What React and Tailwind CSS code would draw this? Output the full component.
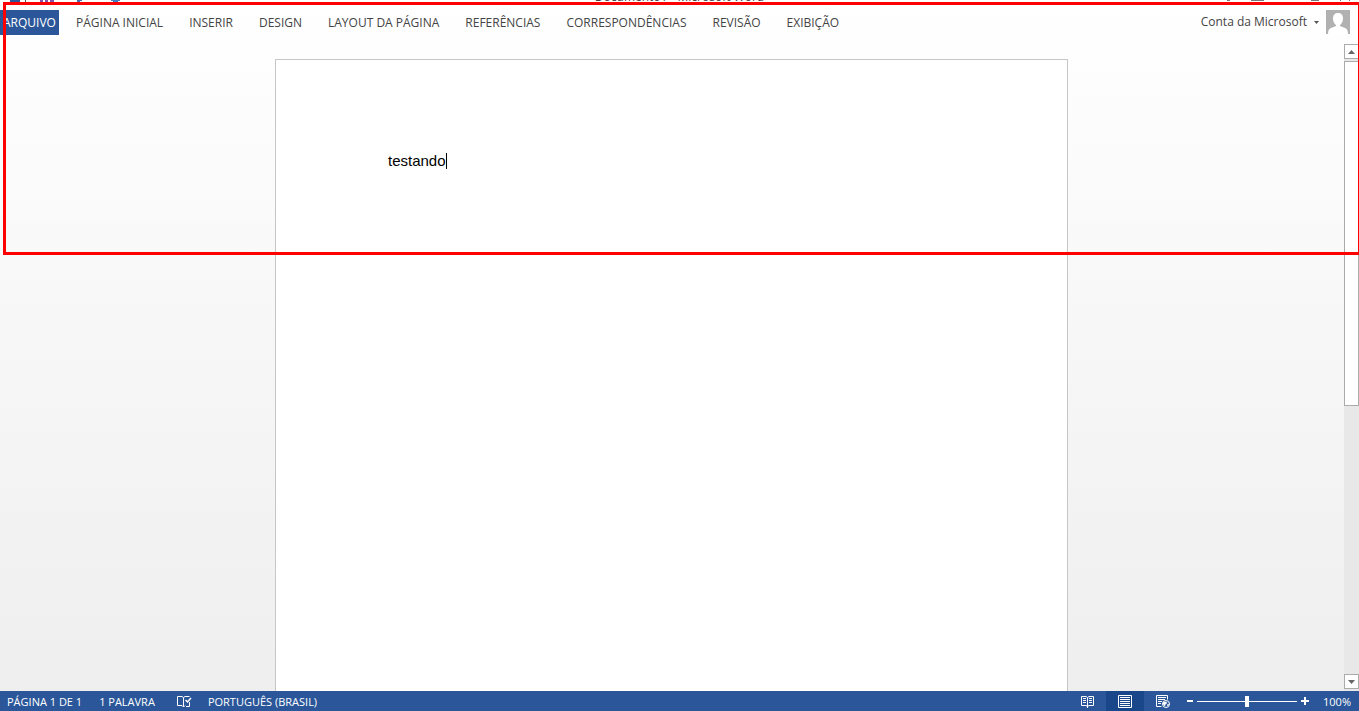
import React, { useState } from 'react';

const tabs = [
    'PÁGINA INICIAL',
    'INSERIR',
    'DESIGN',
    'LAYOUT DA PÁGINA',
    'REFERÊNCIAS',
    'CORRESPONDÊNCIAS',
    'REVISÃO',
    'EXIBIÇÃO',
];

// Only the lower edge of the title bar stays visible
function TitleBar() {
    return (
        <header className="flex h-[10px] shrink-0 items-start justify-between overflow-hidden">
            <svg className="h-[3px] w-[140px]" viewBox="0 0 140 3" shapeRendering="crispEdges">
                <path d="M10 0h10v2H10z" fill="#2b579a" />
                <path d="M25 0h1v2h-1z" fill="#555" />
                <path d="M40 0h3v2h-3zM45 0h3v2h-3zM50 0h4v2h-4z" fill="#8553a8" />
                <path d="M77 0h5v1h-2v1h-3z" fill="#3e6db5" />
                <path d="M111 0h9v1h-2v1h-5v-1h-2z" fill="#3e7dc0" />
            </svg>
            <h1 className="-mt-[11px] text-[12px] leading-[16px] text-[#444]">Documento1 - Microsoft Word</h1>
            <svg className="h-[3px] w-[140px]" viewBox="0 0 140 3" shapeRendering="crispEdges">
                <path d="M8 0h3v1H8zM32 0h13v1H32zM92 0h8v1h-8zM121 0h1v1h-1zM130 0h1v1h-1z" fill="#777" />
            </svg>
        </header>
    );
}

function Ribbon() {
    return (
        <div className="flex h-[34px] shrink-0 items-start justify-between">
            <nav className="flex h-[25px] items-center gap-[26px] text-[12px] leading-[16px] text-[#444]">
                <button className="-mr-[9px] h-full w-[59px] bg-[#2b579a] text-white">ARQUIVO</button>
                {tabs.map((tab) => (
                    <button key={tab} className="whitespace-nowrap">{tab}</button>
                ))}
            </nav>
            <button className="mr-[9px] flex items-center text-[12px] leading-[16px] text-[#444]">
                Conta da Microsoft
                <svg className="ml-[7px] mr-[7px] h-[3px] w-[5px]" viewBox="0 0 5 3">
                    <path d="M0 0h5L2.5 3z" fill="#555" />
                </svg>
                <svg className="size-6" viewBox="0 0 24 24">
                    <path d="M0 0h24v24H0z" fill="#b1b1b1" />
                    <path d="M12 3q5 0 5 5.500c0 3-1.500 5.500-3 6.500v1l5 2q3 1 3 6H2q0-5 3-6l5-2v-1C8.500 14 7 11.500 7 8.500Q7 3 12 3z" fill="#fff" />
                </svg>
            </button>
        </div>
    );
}

function ScrollBar() {
    return (
        <div className="ml-px flex w-[15px] shrink-0 flex-col bg-[#e8e8e8]">
            <button aria-label="Rolar para cima" className="flex h-[15px] shrink-0 items-center justify-center border border-[#ababab] bg-white">
                <svg className="h-1 w-[7px]" viewBox="0 0 7 4"><path d="M0 4h7L3.5 0z" fill="#666" /></svg>
            </button>
            <div className="mt-0.5 flex-1">
                <div className="h-[56.3%] border border-[#ababab] bg-white" />
            </div>
            <button aria-label="Rolar para baixo" className="mb-0.5 flex h-[15px] shrink-0 items-center justify-center border border-[#ababab] bg-white">
                <svg className="h-1 w-[7px]" viewBox="0 0 7 4"><path d="M0 0h7L3.5 4z" fill="#666" /></svg>
            </button>
        </div>
    );
}

function StatusBar() {
    const [zoom, setZoom] = useState(100);

    return (
        <footer className="flex h-5 shrink-0 items-center justify-between bg-[#2b579a] pl-[7px] pr-2 text-[11px] leading-[16px] text-white">
            <div className="flex items-center pt-px">
                <span className="mr-[17px]">PÁGINA 1 DE 1</span>
                <span className="mr-[22px]">1 PALAVRA</span>
                <button aria-label="Revisão de texto" className="mr-4">
                    <svg className="h-[13px] w-[15px]" viewBox="0 0 15 13" fill="none" stroke="#fff">
                        <path d="M6.500 11.500v-9L5 1.500H.5v9H5l1.500 1.500L8 10.500M6.500 2.500L8 1.500h4.500" />
                        <path d="M8.500 5l2 2L14 3" strokeWidth="1.500" />
                        <path d="M12.500 7v4.500H9" />
                    </svg>
                </button>
                <button>PORTUGUÊS (BRASIL)</button>
            </div>
            <div className="flex h-full items-center">
                <button aria-label="Modo de leitura" className="flex h-full w-[38px] items-center justify-center">
                    <svg className="h-[13px] w-[13px]" viewBox="0 0 13 13" fill="none" stroke="#fff">
                        <path d="M.5 1.500H5l1.500 1L8 1.500h4.500v9H8l-1.500 1-1.500-1H.5zM6.500 2.500V13" />
                        <path d="M2 3.500h3M2 5.500h3M2 7.500h3M8 3.500h3M8 5.500h3M8 7.500h3" />
                    </svg>
                </button>
                <button aria-label="Layout de impressão" className="flex h-full w-[38px] items-center justify-center bg-[#19478a]">
                    <svg className="h-[13px] w-[14px]" viewBox="0 0 14 13" fill="none" stroke="#fff">
                        <path d="M.5.5h13v12H.5zM2 2.500h10M2 4.500h10M2 6.500h10M2 8.500h10M2 10.500h10" />
                    </svg>
                </button>
                <button aria-label="Layout da Web" className="flex h-full w-[38px] items-center justify-center">
                    <svg className="h-[13px] w-[14px]" viewBox="0 0 14 13" fill="none" stroke="#fff">
                        <path d="M5.500 11.500h-5V.5h11v4M2 2.500h8M2 4.500h7M2 6.500h4M2 8.500h3" />
                        <circle cx="10" cy="9" r="3.500" />
                        <path d="M7.500 7h3v1.500L9 9.500v1.500L7 9zM11.500 9.500h1.500L11.500 11z" fill="#fff" strokeWidth="0.500" />
                    </svg>
                </button>
                <button aria-label="Reduzir zoom" className="ml-[5px] h-0.5 w-[6px] bg-white" />
                <input
                    type="range"
                    aria-label="Zoom"
                    min="0"
                    max="200"
                    value={zoom}
                    onChange={(e) => setZoom(Number(e.target.value))}
                    className="mx-1 h-[11px] w-[100px] appearance-none bg-[linear-gradient(white,white)] bg-[length:100%_1px] bg-center bg-no-repeat [&::-webkit-slider-thumb]:h-[11px] [&::-webkit-slider-thumb]:w-1 [&::-webkit-slider-thumb]:appearance-none [&::-webkit-slider-thumb]:bg-white"
                />
                <button aria-label="Ampliar zoom">
                    <svg className="size-2" viewBox="0 0 8 8"><path d="M3 0h2v3h3v2H5v3H3V5H0V3h3z" fill="#fff" /></svg>
                </button>
                <span className="ml-[14px] pt-px">{zoom}%</span>
            </div>
        </footer>
    );
}

export default function App() {
    return (
        <div className="relative flex h-screen flex-col overflow-hidden bg-linear-to-b from-white to-[#eeeeee] font-['Open_Sans','Noto_Sans',sans-serif]">
            <TitleBar />
            <Ribbon />
            <div className="flex min-h-0 flex-1">
                <main className="min-w-0 flex-1 overflow-hidden pt-[15px]">
                    <div className="mx-auto h-full w-[793px] border border-b-0 border-[#c6c6c6] bg-white px-28 pt-[92px]">
                        <p className="font-['Liberation_Sans',sans-serif] text-[15px] leading-[18px] text-black">
                            testando<span className="inline-block h-4 w-px bg-black align-text-bottom" />
                        </p>
                    </div>
                </main>
                <ScrollBar />
            </div>
            <StatusBar />

            {/* Highlight over the ribbon, runs past the right edge */}
            <div className="pointer-events-none absolute -right-0.5 left-[3px] top-0.5 h-[253px] border-[3px] border-[#ff0000]" />
        </div>
    );
}
